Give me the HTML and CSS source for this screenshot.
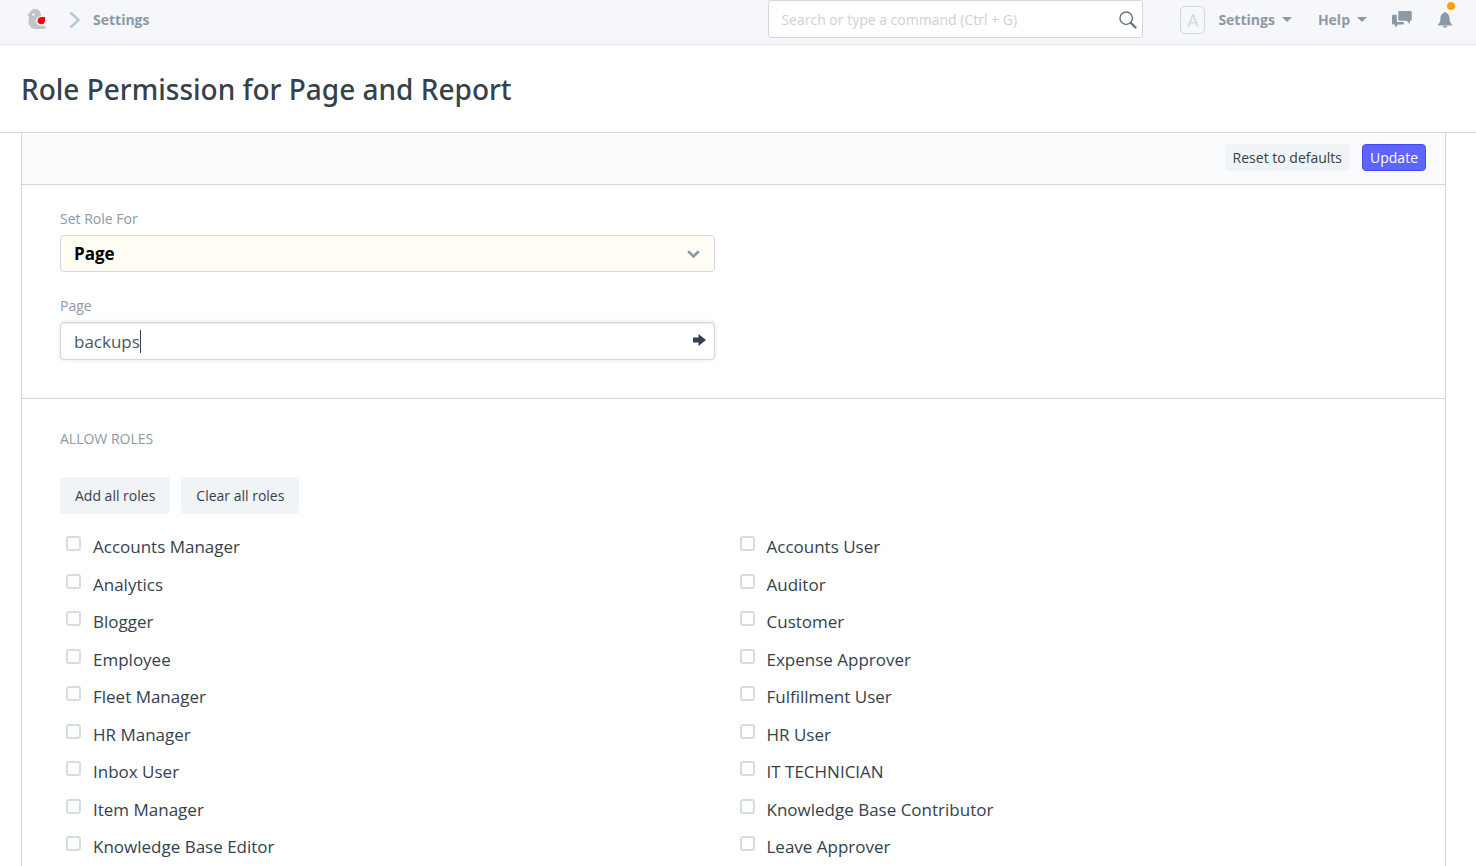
FILE: index.html
```html
<!DOCTYPE html>
<html lang="en">

<head>
    <meta charset="UTF-8">
    <meta name="viewport" content="width=device-width, initial-scale=1.0">
    <title>Role Permission for Page and Report</title>
    <link rel="stylesheet" href="styles.css">
</head>

<body>
    <!-- Navbar -->
    <header class="navbar">
        <nav class="breadcrumbs" aria-label="Breadcrumb">
            <a href="#" class="logo" aria-label="Home">
                <svg width="19" height="21" viewBox="0 0 19 21">
                    <path fill="#c0c4c4" d="M0 6 2.500 4C3.500 1.500 5.500 0 8 0c3.500 0 6 2.500 6 6v1c-3 .5-5 2.500-5 5 0 3 2 4.800 5 4.800h3.500c1.500 0 1.500 3.200 0 3.200H9c-5 0-7.500-3.500-7.500-7.500L2 7z" />
                    <circle cx="6.500" cy="5.500" r="1.300" fill="#f5f7fa" />
                    <path fill="#f00" d="M10.500 12c0-2.500 2-4 4-4H18v3.500c0 2.300-1.600 3.700-3.700 3.700-2.300 0-3.800-1.200-3.800-3.200z" />
                </svg>
            </a>
            <svg class="crumb-arrow" width="12" height="18" viewBox="0 0 12 18">
                <path fill="none" stroke="#b8c7d6" stroke-width="2.400" d="M1.500 1.500 9.500 9l-8 7.500" />
            </svg>
            <a href="#" class="nav-link">Settings</a>
        </nav>
        <div class="search">
            <input type="text" class="search-input" aria-label="Search" placeholder="Search or type a command (Ctrl + G)">
            <svg class="search-icon" width="18" height="18" viewBox="0 0 18 18">
                <circle cx="7.200" cy="7.200" r="6.200" fill="none" stroke="#6c7680" stroke-width="1.500" />
                <path stroke="#6c7680" stroke-width="2.400" stroke-linecap="round" d="m12 12 4.500 4.500" />
            </svg>
        </div>
        <div class="nav-right">
            <span class="avatar">A</span>
            <button type="button" class="nav-button">Settings<span class="caret"></span></button>
            <button type="button" class="nav-button nav-help">Help<span class="caret"></span></button>
            <button type="button" class="nav-icon nav-chat" aria-label="Chat">
                <svg width="20" height="17" viewBox="0 0 20 17">
                    <path fill="#8d99a6" d="M7.500 0h11A1.200 1.200 0 0 1 19.700 1.200v7.300a1.200 1.200 0 0 1-1.200 1.200H18v3.300l-3.500-3.300h-7A1.200 1.200 0 0 1 6.300 8.500V1.200A1.200 1.200 0 0 1 7.500 0z" />
                    <path fill="#8d99a6" d="M1.200 3.800h3.600V9.500a1.600 1.600 0 0 0 1.600 1.600h5.500v1.200a1.200 1.200 0 0 1-1.200 1.200H6L3 16.500v-3H1.200A1.200 1.200 0 0 1 0 12.300V5a1.200 1.200 0 0 1 1.200-1.200z" />
                </svg>
            </button>
            <button type="button" class="nav-icon nav-bell" aria-label="Notifications">
                <svg width="14" height="16" viewBox="0 0 14 16">
                    <path fill="#8d99a6" d="M7 0c.8 0 1.200.6 1.200 1.300C10.500 1.800 11.400 3.600 11.500 6c.1 3.200.8 5 2.500 6.500V13.500H0V12.500C1.700 11 2.400 9.200 2.500 6c.1-2.400 1-4.200 3.300-4.700C5.800.6 6.200 0 7 0zM5 14h4c0 1-.8 1.700-2 1.700S5 15 5 14z" />
                </svg>
                <span class="dot"></span>
            </button>
        </div>
    </header>

    <div class="page-head">
        <h1>Role Permission for Page and Report</h1>
    </div>

    <main class="card">
        <div class="toolbar">
            <button type="button" class="btn btn-sm">Reset to defaults</button>
            <button type="button" class="btn btn-sm btn-primary">Update</button>
        </div>

        <section class="section fields">
            <div class="field">
                <label for="setRoleFor">Set Role For</label>
                <div class="control">
                    <select id="setRoleFor" class="form-control required">
                        <option>Page</option>
                        <option>Report</option>
                    </select>
                    <svg class="select-icon" width="13" height="9" viewBox="0 0 13 9">
                        <path fill="none" stroke="#8d99a6" stroke-width="2.600" d="M1.200 1.300 6.500 6.500l5.300-5.200" />
                    </svg>
                </div>
            </div>
            <div class="field">
                <label for="page">Page</label>
                <div class="control">
                    <input type="text" id="page" class="form-control active" value="backups">
                    <span class="text-cursor"></span>
                    <a href="#" class="link-icon" aria-label="Open page">
                        <svg width="13" height="12" viewBox="0 0 13 12">
                            <path fill="#36414c" d="M0 3.500h5.500V0L13 6l-7.500 6V8.500H0z" />
                        </svg>
                    </a>
                </div>
            </div>
        </section>

        <section class="section roles">
            <h2>Allow Roles</h2>
            <div class="role-buttons">
                <button type="button" class="btn">Add all roles</button>
                <button type="button" class="btn">Clear all roles</button>
            </div>
            <div class="role-list">
                <label class="role"><input type="checkbox">Accounts Manager</label>
                <label class="role"><input type="checkbox">Accounts User</label>
                <label class="role"><input type="checkbox">Analytics</label>
                <label class="role"><input type="checkbox">Auditor</label>
                <label class="role"><input type="checkbox">Blogger</label>
                <label class="role"><input type="checkbox">Customer</label>
                <label class="role"><input type="checkbox">Employee</label>
                <label class="role"><input type="checkbox">Expense Approver</label>
                <label class="role"><input type="checkbox">Fleet Manager</label>
                <label class="role"><input type="checkbox">Fulfillment User</label>
                <label class="role"><input type="checkbox">HR Manager</label>
                <label class="role"><input type="checkbox">HR User</label>
                <label class="role"><input type="checkbox">Inbox User</label>
                <label class="role"><input type="checkbox">IT TECHNICIAN</label>
                <label class="role"><input type="checkbox">Item Manager</label>
                <label class="role"><input type="checkbox">Knowledge Base Contributor</label>
                <label class="role"><input type="checkbox">Knowledge Base Editor</label>
                <label class="role"><input type="checkbox">Leave Approver</label>
            </div>
        </section>
    </main>
</body>

</html>
```
FILE: styles.css
```css
* {
    box-sizing: border-box;
}

body {
    margin: 0;
    height: 100vh;
    overflow: hidden;
    background: #fff;
    color: #36414c;
    font-family: "Segoe UI", "Open Sans", "Noto Sans", sans-serif;
    font-size: 14px;
}

button,
input,
select {
    font-family: inherit;
    font-size: inherit;
}

svg {
    display: block;
}

/* Navbar */
.navbar {
    display: flex;
    height: 45px;
    padding: 0 24px 0 27px;
    background: #f5f7fa;
    border-bottom: 1px solid #e4e9ed;
}

.breadcrumbs {
    display: flex;
    align-items: center;
    flex: 1;
    height: 39px;
}

.crumb-arrow {
    margin: 0 12px 0 23px;
}

.nav-link,
.nav-button {
    color: #8d99a6;
    font-size: 14px;
    font-weight: 700;
    text-decoration: none;
}

.search {
    position: relative;
    width: 375px;
    height: 38px;
}

.search-input {
    width: 100%;
    height: 38px;
    padding: 0 40px 0 12px;
    background: #fff;
    border: 1px solid #d1d8dd;
    border-radius: 3px;
    color: #36414c;
}

.search-input::placeholder {
    color: #cbd2d8;
}

.search-icon {
    position: absolute;
    top: 11px;
    right: 6px;
}

.nav-right {
    display: flex;
    align-items: center;
    height: 39px;
    margin-left: 37px;
}

.avatar {
    width: 25px;
    height: 28px;
    margin-right: 13px;
    border: 1px solid #d1d8dd;
    border-radius: 5px;
    color: #d1d8dd;
    font-size: 18px;
    line-height: 26px;
    text-align: center;
}

.nav-button,
.nav-icon {
    display: flex;
    align-items: center;
    padding: 0;
    background: none;
    border: 0;
}

.nav-help {
    margin-left: 26px;
}

.caret {
    margin-left: 7px;
    border-top: 5px solid #8d99a6;
    border-right: 5px solid transparent;
    border-left: 5px solid transparent;
}

.nav-chat {
    margin-left: 25px;
}

.nav-bell {
    position: relative;
    margin-left: 26px;
}

.dot {
    position: absolute;
    top: -10px;
    right: -3px;
    width: 8px;
    height: 8px;
    background: #ffa00a;
    border-radius: 50%;
}

/* Page title */
.page-head {
    display: flex;
    align-items: center;
    height: 88px;
    padding: 0 21px;
    border-bottom: 1px solid #d1d8dd;
}

h1 {
    margin: 0;
    font-family: "Segoe UI", "Noto Sans", "Open Sans", sans-serif;
    font-size: 28px;
    font-weight: 500;
}

/* Card */
.card {
    margin: 0 30px 0 21px;
    border: 1px solid #d1d8dd;
    border-top: 0;
}

.toolbar {
    display: flex;
    justify-content: flex-end;
    gap: 12px;
    padding: 11px 19px 13px;
    background: #fafbfc;
    border-bottom: 1px solid #d1d8dd;
}

.btn {
    height: 37px;
    padding: 0 14px;
    background: #f0f4f7;
    border: 1px solid #f0f4f7;
    border-radius: 4px;
    color: #36414c;
    font-size: 14px;
}

.btn-sm {
    height: 27px;
    padding: 0 7px;
}

.btn-primary {
    background: #5e64ff;
    border-color: #444bff;
    color: #fff;
}

.section {
    padding: 0 38px;
}

/* Fields */
.fields {
    padding-top: 24px;
    padding-bottom: 38px;
    border-bottom: 1px solid #d1d8dd;
}

.field {
    width: calc(50% - 19px);
}

.field + .field {
    margin-top: 24px;
}

.field label {
    display: block;
    margin-bottom: 6px;
    color: #8d99a6;
    font-size: 14px;
    line-height: 20px;
}

.control {
    position: relative;
}

.form-control {
    display: block;
    width: 100%;
    height: 37px;
    padding: 0 13px;
    background: #fff;
    border: 1px solid #d1d8dd;
    border-radius: 4px;
    color: #4c5660;
    font-size: 17px;
    appearance: none;
}

.form-control.required {
    background: #fffdf4;
    color: #000;
    font-weight: 700;
}

.form-control.active {
    height: 38px;
    box-shadow: inset 0 1px 1px #e8ecef, 0 0 4px #dfe5ea;
}

.select-icon {
    position: absolute;
    top: 15px;
    right: 15px;
    pointer-events: none;
}

.link-icon {
    position: absolute;
    top: 12px;
    right: 9px;
}

.text-cursor {
    position: absolute;
    top: 8px;
    left: 80px;
    width: 1px;
    height: 23px;
    background: #36414c;
}

/* Roles */
.roles {
    padding-top: 30px;
}

h2 {
    margin: 0 0 28px;
    color: #8d99a6;
    font-size: 14px;
    font-weight: 400;
    line-height: 20px;
    text-transform: uppercase;
}

.role-buttons {
    display: flex;
    gap: 11px;
    margin-bottom: 14px;
}

.role-list {
    display: grid;
    grid-template-columns: 1fr 1fr;
    grid-auto-rows: 38px 37px;
}

.role {
    display: flex;
    align-items: flex-start;
    padding-left: 6px;
    font-size: 17px;
    line-height: 37px;
}

.role input {
    width: 15px;
    height: 15px;
    margin: 8px 12px 0 0;
    background: #fff;
    border: 2px solid #d5dde3;
    border-radius: 3px;
    appearance: none;
}
```
